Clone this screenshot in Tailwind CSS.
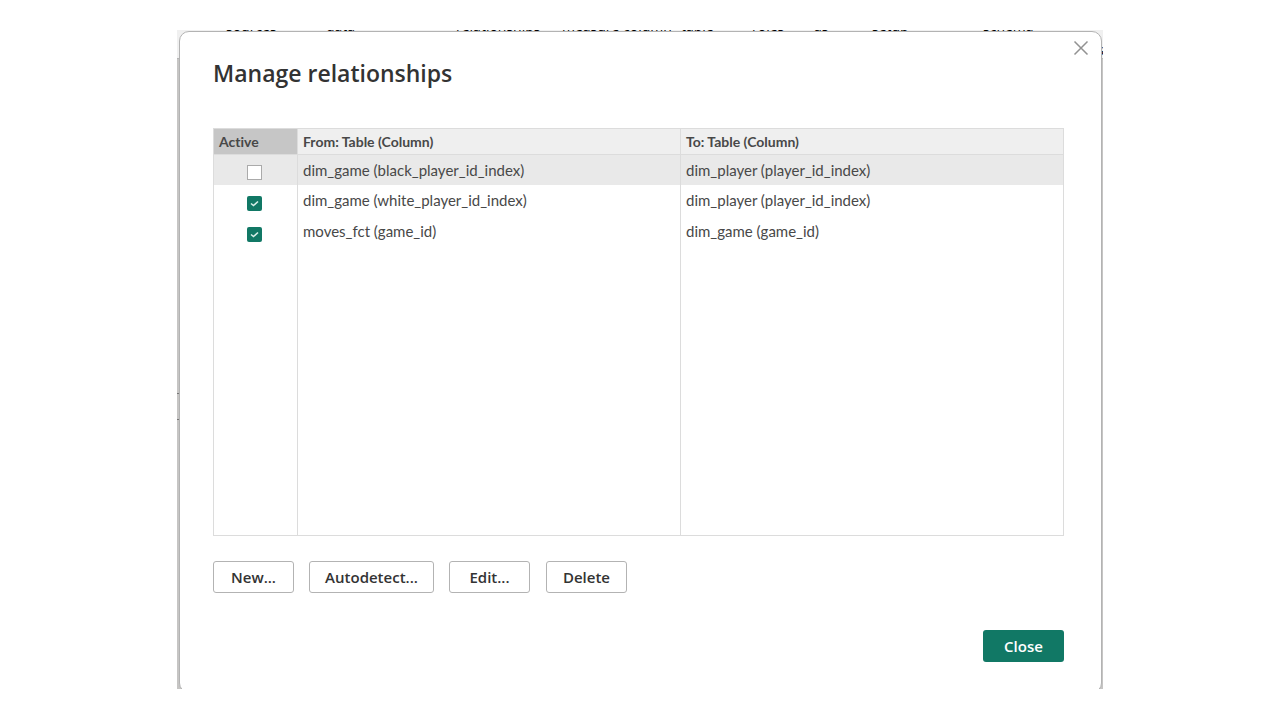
<!DOCTYPE html>
<html lang="en">
<head>
<meta charset="utf-8">
<title>Manage relationships</title>
<script src="https://cdn.jsdelivr.net/npm/@tailwindcss/browser@4"></script>
</head>
<body class="bg-white px-[177px] py-[30px] font-['Open_Sans','Noto_Sans',sans-serif] text-[#333]">
<div class="relative overflow-hidden bg-[#c6c5c4] pl-[2px] pr-px pt-px">
  <!-- Ribbon behind the dialog -->
  <div aria-hidden="true" class="absolute inset-x-0 top-0 h-[29px] border-b border-[#b5b5b5] bg-[#f0f0f0] text-sm leading-4 text-black">
    <span class="absolute -top-3 left-[49px]">sources</span>
    <span class="absolute -top-3 left-[149px]">data</span>
    <span class="absolute -top-3 left-[279px]">relationships</span>
    <span class="absolute -top-3 left-[385px]">measure column</span>
    <span class="absolute -top-3 left-[504px]">table</span>
    <span class="absolute -top-3 left-[575px]">roles</span>
    <span class="absolute -top-3 left-[637px]">as</span>
    <span class="absolute -top-3 left-[695px]">setup</span>
    <span class="absolute -top-3 left-[806px]">schema</span>
    <span class="absolute top-3 -right-px">s</span>
  </div>
  <div aria-hidden="true" class="absolute left-0 top-[363px] h-[27px] w-[3px] border-y border-[#777]"></div>

  <section role="dialog" aria-labelledby="title" class="relative -mb-1 rounded-[10px] border border-[#b3b3b3] bg-white pb-[30px] pl-[33px] pr-[37px] pt-[23px]">
    <button aria-label="Close dialog" class="absolute right-3 top-2 grid size-4 place-items-center">
      <svg class="size-4" viewBox="0 0 16 16" fill="none" stroke="#929292" stroke-width="1.5"><path d="M1.5 1.5 14.5 14.5M14.5 1.5 1.5 14.5"/></svg>
    </button>
    <h1 id="title" class="text-[23px] leading-9 font-semibold">Manage relationships</h1>

    <table class="mt-[37px] w-full table-fixed border-collapse border border-[#dcdcdc] text-left font-[Lato,sans-serif] text-[15px] leading-5 text-[#484848] [font-variant-ligatures:none]">
      <colgroup><col class="w-[84px]"><col><col></colgroup>
      <thead>
        <tr class="h-[26px] border-b border-[#dcdcdc] bg-[#efefef] text-sm">
          <th class="border-r border-[#dcdcdc] bg-[#c6c6c6] px-[5px] font-bold">Active</th>
          <th class="border-r border-[#dcdcdc] px-[5px] font-bold">From: Table (Column)</th>
          <th class="px-[5px] font-bold">To: Table (Column)</th>
        </tr>
      </thead>
      <tbody>
        <tr class="h-[30px] bg-[#e9e9e9]">
          <td class="border-r border-[#dcdcdc] pr-[3px] pt-[6px]"><input type="checkbox" aria-label="dim_game (black_player_id_index) active" class="mx-auto block size-[15px] appearance-none border border-[#aaa] bg-white"></td>
          <td class="border-r border-[#dcdcdc] px-[5px]">dim_game (black_player_id_index)</td>
          <td class="px-[5px]">dim_player (player_id_index)</td>
        </tr>
        <tr class="h-[31px]">
          <td class="border-r border-[#dcdcdc] pr-[3px] pt-[6px]"><span class="relative mx-auto block size-[15px]"><input type="checkbox" checked aria-label="dim_game (white_player_id_index) active" class="block size-[15px] appearance-none rounded-[2px] bg-[#117865]"><svg class="pointer-events-none absolute inset-0" viewBox="0 0 15 15" fill="none" stroke="#d8eee8" stroke-width="1.6"><path d="M4 7.5 6.5 9.5 11 5.5"/></svg></span></td>
          <td class="border-r border-[#dcdcdc] px-[5px]">dim_game (white_player_id_index)</td>
          <td class="px-[5px]">dim_player (player_id_index)</td>
        </tr>
        <tr class="h-[31px]">
          <td class="border-r border-[#dcdcdc] pr-[3px] pt-[6px]"><span class="relative mx-auto block size-[15px]"><input type="checkbox" checked aria-label="moves_fct (game_id) active" class="block size-[15px] appearance-none rounded-[2px] bg-[#117865]"><svg class="pointer-events-none absolute inset-0" viewBox="0 0 15 15" fill="none" stroke="#d8eee8" stroke-width="1.6"><path d="M4 7.5 6.5 9.5 11 5.5"/></svg></span></td>
          <td class="border-r border-[#dcdcdc] px-[5px]">moves_fct (game_id)</td>
          <td class="px-[5px]">dim_game (game_id)</td>
        </tr>
        <tr class="h-[289px]">
          <td class="border-r border-[#dcdcdc]"></td><td class="border-r border-[#dcdcdc]"></td><td></td>
        </tr>
      </tbody>
    </table>

    <div class="mt-[25px] flex gap-4 text-[15px] leading-5 font-semibold">
      <button class="h-8 w-[81px] rounded-[3px] border border-[#b3b3b3] pb-px">New...</button>
      <button class="-ml-px h-8 w-[125px] rounded-[3px] border border-[#b3b3b3] pb-px">Autodetect...</button>
      <button class="-ml-px h-8 w-[81px] rounded-[3px] border border-[#b3b3b3] pb-px">Edit...</button>
      <button class="h-8 w-[81px] rounded-[3px] border border-[#b3b3b3] pb-px">Delete</button>
    </div>
    <div class="mt-[37px] flex justify-end">
      <button class="h-8 w-[81px] rounded-[3px] bg-[#117865] text-[15px] leading-5 font-semibold text-white">Close</button>
    </div>
  </section>
</div>
</body>
</html>
